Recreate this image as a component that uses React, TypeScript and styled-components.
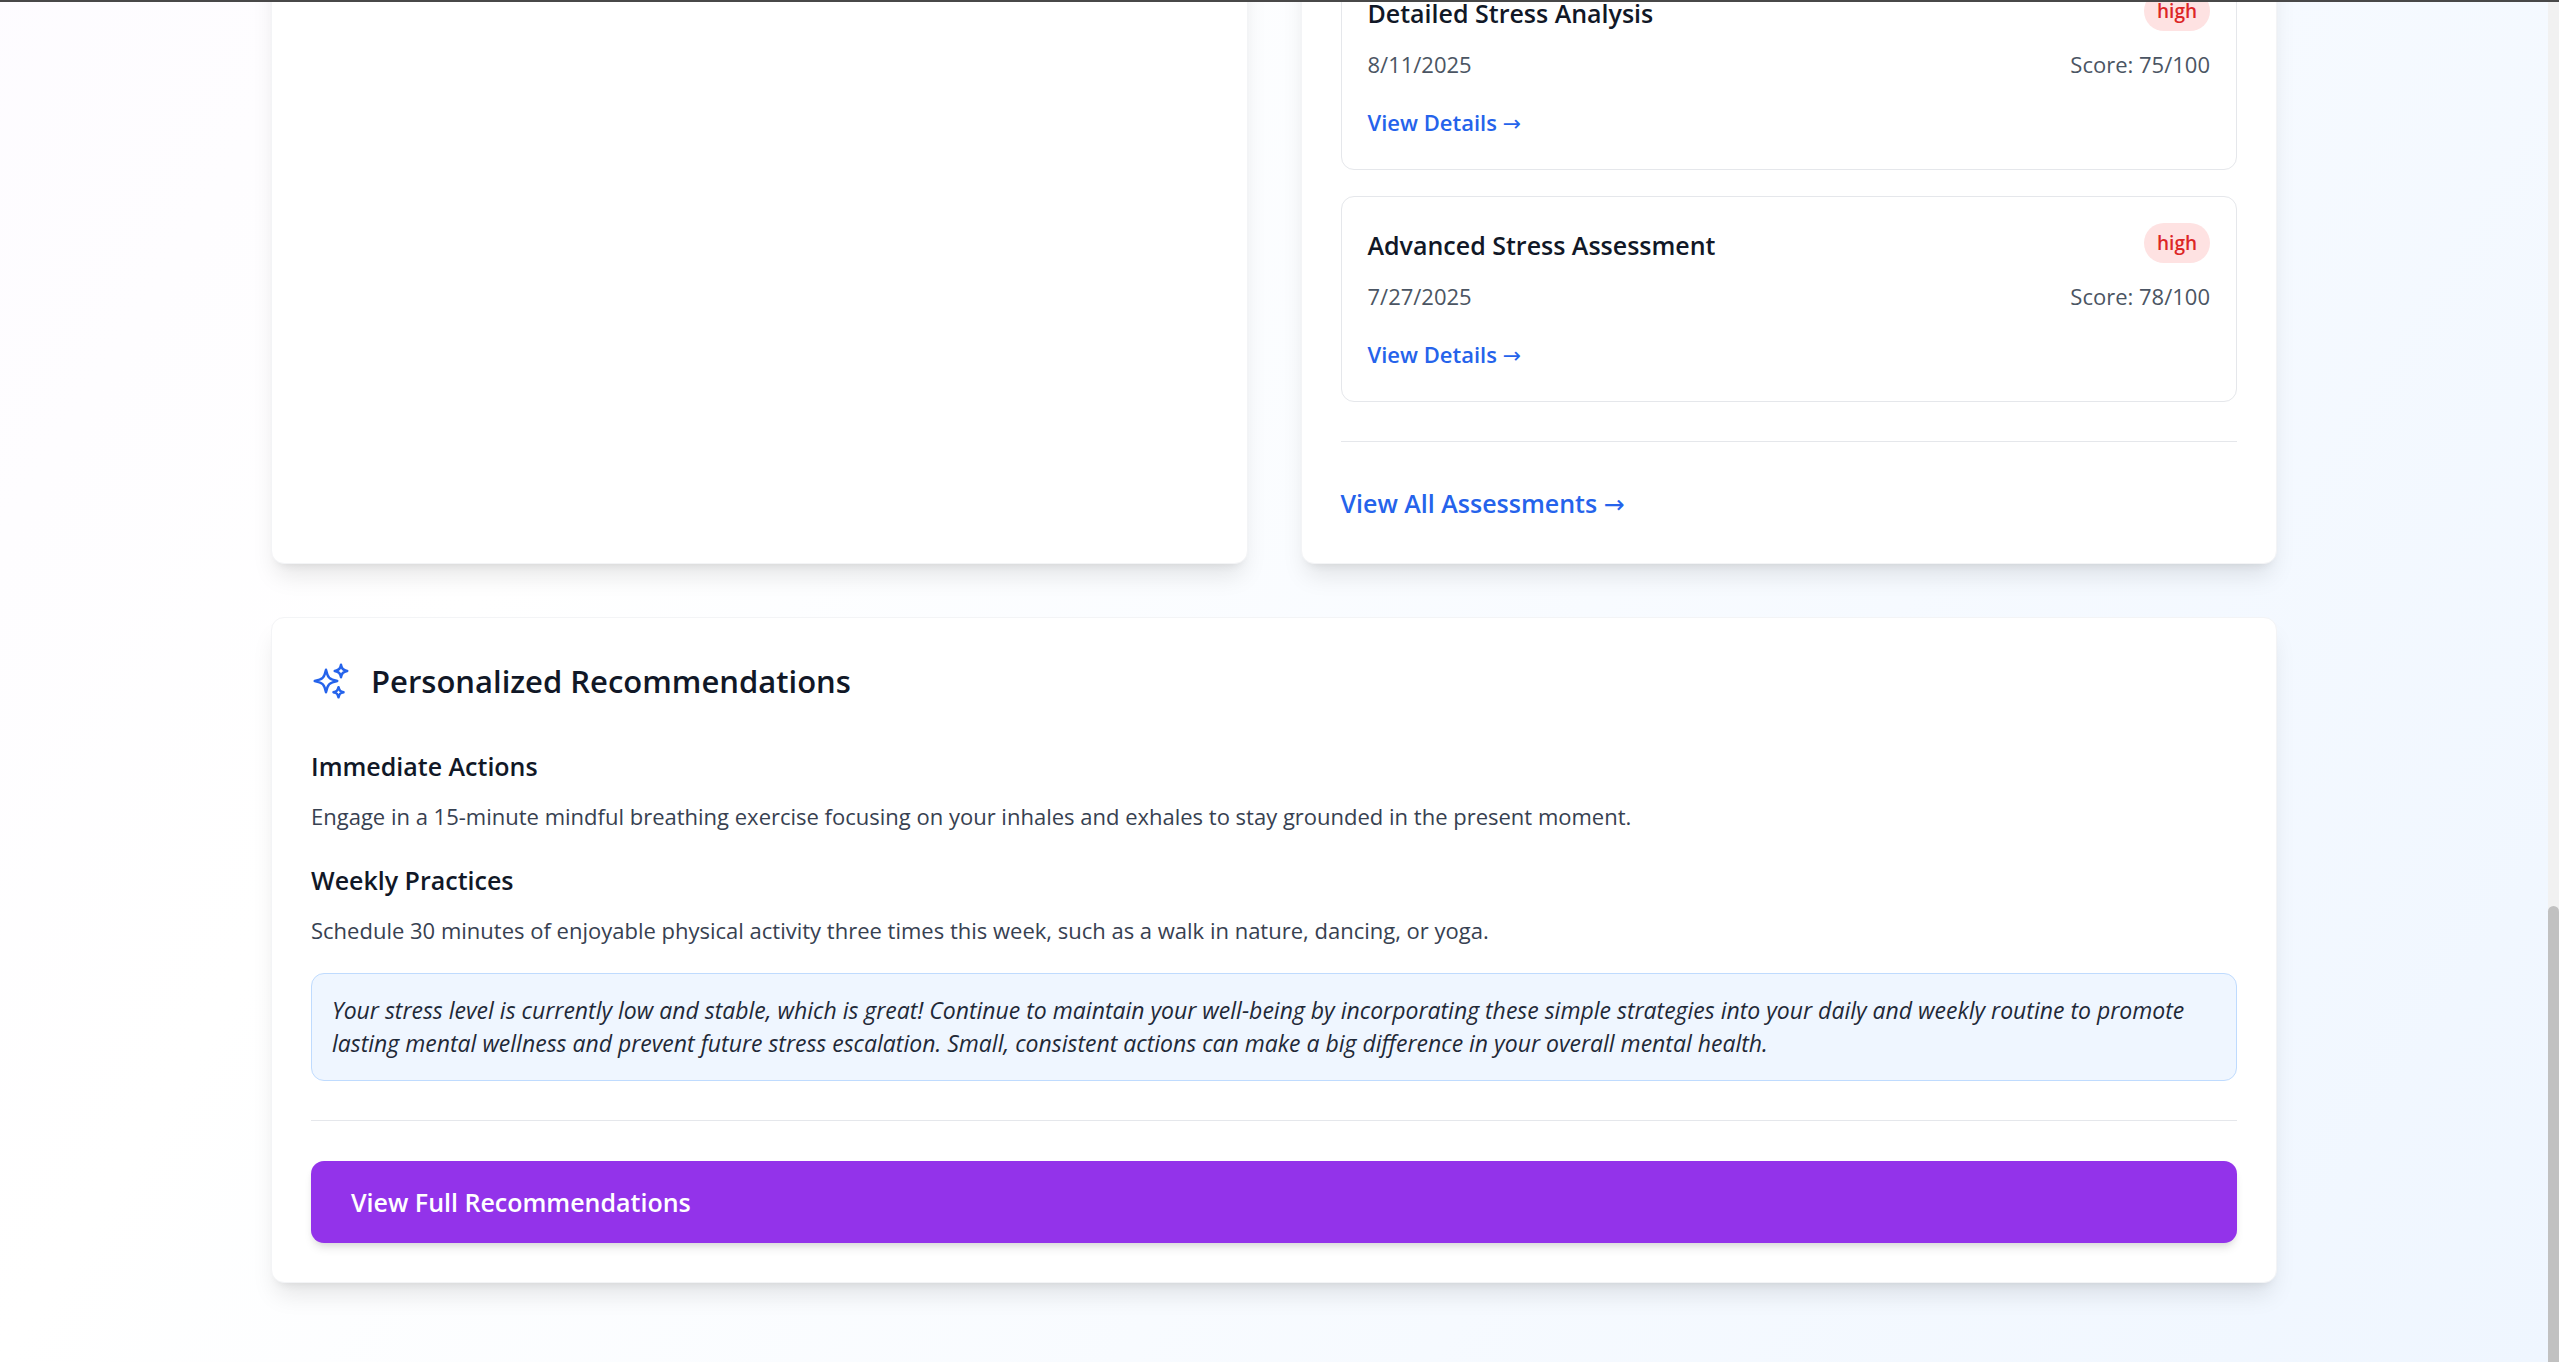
import React from "react";
import styled, { createGlobalStyle } from "styled-components";
import { HiOutlineSparkles } from "react-icons/hi2";

const GlobalStyle = createGlobalStyle`
  *, *::before, *::after { box-sizing: border-box; }
  body {
    margin: 0;
    overflow: hidden;
    color: #111827;
    font-family: "Segoe UI", "Open Sans", "Noto Sans", sans-serif;
    font-size: 22px;
    line-height: 33px;
  }
  h2, h3, p { margin: 0; }
`;

const Shell = styled.div`
  display: flex;
  height: 100vh;
  border-top: 2px solid #484848;
`;

/* The page is shown at the end of its scroll range, so its content rests on the bottom edge. */
const Page = styled.div`
  flex: 1;
  min-width: 0;
  display: flex;
  flex-direction: column;
  justify-content: flex-end;
  overflow: hidden;
  background: linear-gradient(to bottom right, #faf5ff, #ffffff, #eff6ff) bottom / 100% 300vh no-repeat;
`;

const ScrollTrack = styled.div`
  width: 11px;
  display: flex;
  flex-direction: column;
  justify-content: flex-end;
  background: #f1f1f1;
`;

const ScrollThumb = styled.div`
  height: 33.5%;
  border-radius: 6px 6px 0 0;
  background: #c1c1c1;
`;

const Content = styled.main`
  flex: none;
  display: flex;
  flex-direction: column;
  gap: 53px;
  width: 100%;
  max-width: 2086px;
  margin: 0 auto;
  padding: 0 40px 79px;
`;

const Columns = styled.div`
  display: grid;
  grid-template-columns: repeat(2, minmax(0, 1fr));
  gap: 53px;
`;

const Card = styled.section`
  padding: 39px;
  border: 1px solid #f3f4f6;
  border-radius: 13px;
  background: #ffffff;
  box-shadow: 0 16px 25px -5px rgba(0, 0, 0, 0.1), 0 7px 10px -7px rgba(0, 0, 0, 0.1);
`;

const AssessmentList = styled.div`
  display: flex;
  flex-direction: column;
  gap: 26px;
`;

const Assessment = styled.article`
  padding: 26px 26px 30px;
  border: 1px solid #e5e7eb;
  border-radius: 13px;
`;

const Subheading = styled.h3`
  font-size: 25px;
  font-weight: 600;
  line-height: 42px;
`;

const AssessmentHead = styled.div`
  display: flex;
  align-items: flex-start;
  justify-content: space-between;
  margin-bottom: 13px;

  ${Subheading} {
    line-height: 44px;
  }
`;

const Badge = styled.span`
  padding: 0 13px;
  border-radius: 20px;
  background: #fee2e2;
  color: #dc2626;
  font-size: 19px;
  font-weight: 600;
  line-height: 40px;
`;

const AssessmentMeta = styled.div`
  display: flex;
  justify-content: space-between;
  margin-bottom: 25px;
  color: #4b5563;
`;

const DetailLink = styled.a`
  display: block;
  width: fit-content;
  color: #2563eb;
  font-weight: 600;
  text-decoration: none;
`;

const AllLink = styled(DetailLink)`
  font-size: 25px;
  line-height: 42px;
`;

const Arrow = styled.span`
  font-family: "DejaVu Sans", sans-serif;
  font-weight: 400;
  line-height: 1;
`;

const Footer = styled.div`
  margin-top: 39px;
  padding-top: 40px;
  border-top: 1px solid #e5e7eb;
`;

const CardTitle = styled.div`
  display: flex;
  align-items: center;
  gap: 20px;
  margin-bottom: 40px;

  svg {
    flex: none;
    width: 40px;
    height: 40px;
    color: #2563eb;
  }

  h2 {
    font-size: 31px;
    font-weight: 600;
    line-height: 48px;
  }
`;

const Advice = styled.div`
  margin-bottom: 26px;

  p {
    margin-top: 13px;
    color: #374151;
  }
`;

const Note = styled.p`
  padding: 20px;
  border: 1px solid #bfdbfe;
  border-radius: 13px;
  background: #eff6ff;
  color: #1f2937;
  font-size: 23px;
  font-style: italic;
`;

const PrimaryButton = styled.button`
  display: block;
  width: 100%;
  padding: 20px 40px;
  border: 0;
  border-radius: 13px;
  background: #9333ea;
  box-shadow: 0 7px 10px -2px rgba(0, 0, 0, 0.1), 0 3px 7px -3px rgba(0, 0, 0, 0.1);
  color: #ffffff;
  font-family: inherit;
  font-size: 25px;
  font-weight: 600;
  line-height: 42px;
  text-align: left;
  cursor: pointer;
`;

const assessments = [
  { title: "Detailed Stress Analysis", date: "8/11/2025", score: 75, level: "high" },
  { title: "Advanced Stress Assessment", date: "7/27/2025", score: 78, level: "high" },
];

const advice = [
  {
    title: "Immediate Actions",
    text: "Engage in a 15-minute mindful breathing exercise focusing on your inhales and exhales to stay grounded in the present moment.",
  },
  {
    title: "Weekly Practices",
    text: "Schedule 30 minutes of enjoyable physical activity three times this week, such as a walk in nature, dancing, or yoga.",
  },
];

export default function App() {
  return (
    <>
      <GlobalStyle />
      <Shell>
        <Page>
          <Content>
            <Columns>
              <Card />
              <Card>
                <AssessmentList>
                  {assessments.map((item) => (
                    <Assessment key={item.title}>
                      <AssessmentHead>
                        <Subheading>{item.title}</Subheading>
                        <Badge>{item.level}</Badge>
                      </AssessmentHead>
                      <AssessmentMeta>
                        <span>{item.date}</span>
                        <span>Score: {item.score}/100</span>
                      </AssessmentMeta>
                      <DetailLink href="#details">
                        View Details <Arrow>→</Arrow>
                      </DetailLink>
                    </Assessment>
                  ))}
                </AssessmentList>
                <Footer>
                  <AllLink href="#assessments">
                    View All Assessments <Arrow>→</Arrow>
                  </AllLink>
                </Footer>
              </Card>
            </Columns>
            <Card>
              <CardTitle>
                <HiOutlineSparkles aria-hidden="true" />
                <h2>Personalized Recommendations</h2>
              </CardTitle>
              {advice.map((item) => (
                <Advice key={item.title}>
                  <Subheading>{item.title}</Subheading>
                  <p>{item.text}</p>
                </Advice>
              ))}
              <Note>
                Your stress level is currently low and stable, which is great! Continue to maintain your well-being by
                incorporating these simple strategies into your daily and weekly routine to promote lasting mental
                wellness and prevent future stress escalation. Small, consistent actions can make a big difference in
                your overall mental health.
              </Note>
              <Footer>
                <PrimaryButton type="button">View Full Recommendations</PrimaryButton>
              </Footer>
            </Card>
          </Content>
        </Page>
        <ScrollTrack aria-hidden="true">
          <ScrollThumb />
        </ScrollTrack>
      </Shell>
    </>
  );
}
